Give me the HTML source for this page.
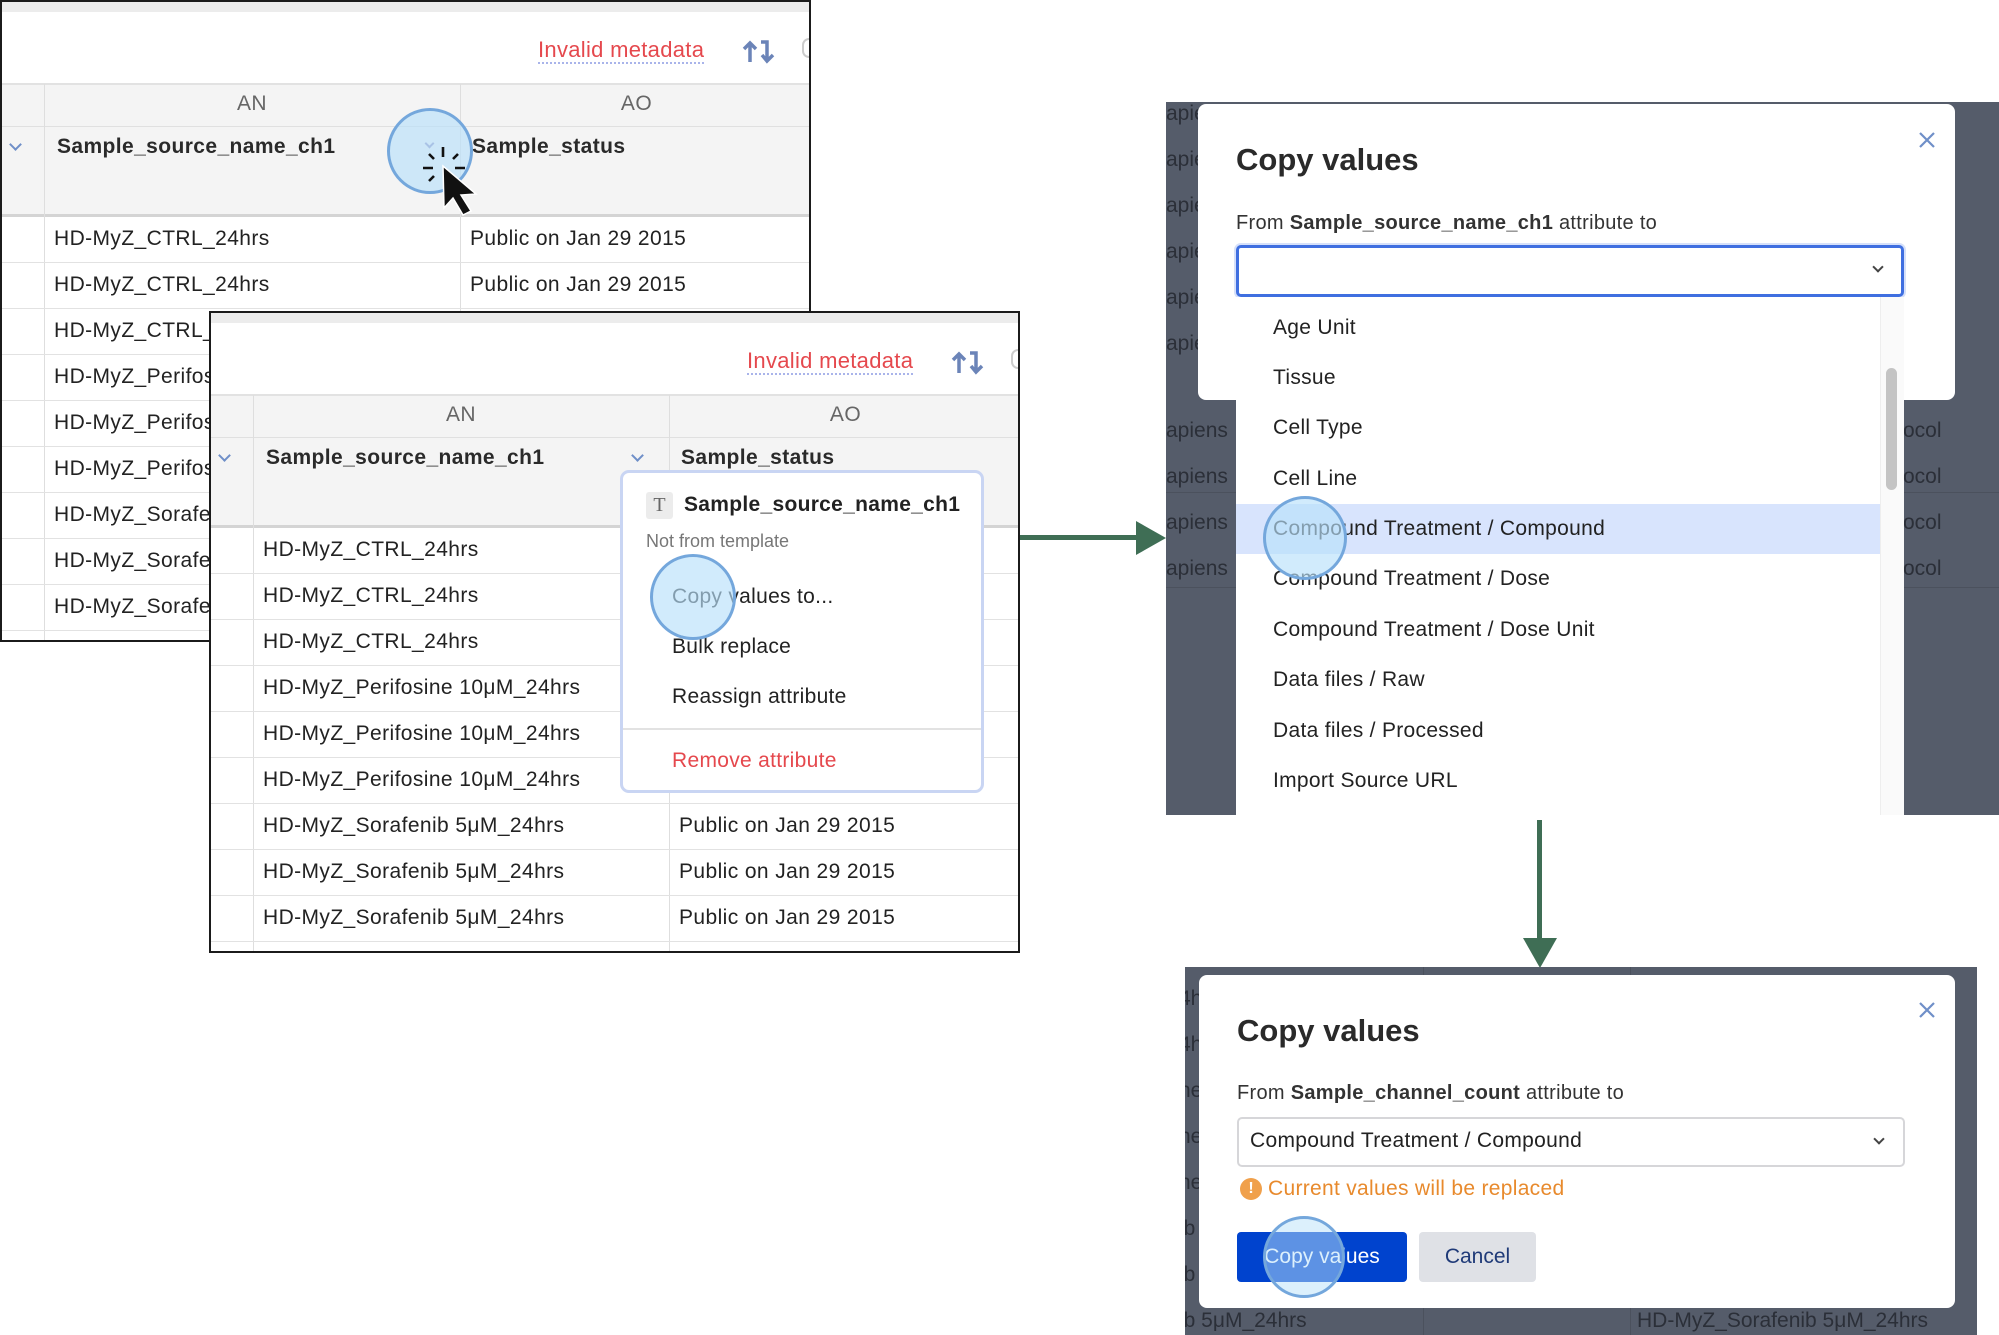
<!DOCTYPE html>
<html><head><meta charset="utf-8"><style>
*{box-sizing:border-box;margin:0;padding:0}
body{width:1999px;height:1335px;background:#fff;position:relative;overflow:hidden;font-family:"Liberation Sans",sans-serif;color:#222}
.a{position:absolute;white-space:nowrap}
.panel{position:absolute;width:811px;height:642px;border:2px solid #1b1b1b;background:#fff;overflow:hidden}
.panel .top{position:absolute;left:0;top:0;width:100%;height:10px;background:#ececec}
.panel .hdr{position:absolute;left:0;top:81px;width:100%;height:134px;background:#f4f4f4;border-top:2px solid #e2e2e2;border-bottom:3px solid #d4d4d4}
.vl{position:absolute;width:1px;background:#dedede}
.hl{position:absolute;height:1px;background:#e2e2e2;left:0;width:100%}
.cell{position:absolute;font-size:21px;letter-spacing:.4px;color:#222;white-space:nowrap}
.inv{position:absolute;font-size:22px;letter-spacing:.3px;color:#e5484d;border-bottom:2px dotted #a9b4ea;line-height:25px}
.circ{position:absolute;border-radius:50%;background:rgba(185,225,250,.65);border:3px solid #74a7dc}
.ov{position:absolute;background:#555c6a;overflow:hidden}
.ovt{position:absolute;font-size:21px;color:#2b2f38;white-space:nowrap}
.modal{position:absolute;background:#fff;border-radius:8px}
.chev{position:absolute;width:9px;height:9px;border-right:2px solid #444;border-bottom:2px solid #444;transform:rotate(45deg)}
.bchev{position:absolute;width:9px;height:9px;border-right:2px solid #6f8fc8;border-bottom:2px solid #6f8fc8;transform:rotate(45deg)}
.it{position:absolute;left:37px;font-size:21px;letter-spacing:.3px;color:#222}
</style></head><body>

<!-- PANEL 1 -->
<div class="panel" style="left:0;top:0">
 <div class="top"></div>
 <div class="inv" style="left:536px;top:35px">Invalid metadata</div>
 <svg class="a" style="left:740px;top:36px" width="34" height="28" viewBox="0 0 34 28"><path d="M8 24V5M2 11l6-6 6 6M19 4h6v19M20 17l5 6 6-6" fill="none" stroke="#6b84b8" stroke-width="3.5"/></svg>
 <div class="a" style="left:800px;top:36px;width:14px;height:20px;border:2px solid #ccc;border-radius:8px"></div>
 <div class="hdr"></div>
 <div class="hl" style="top:124px;background:#e0e0e0"></div>
 <div class="vl" style="left:42px;top:82px;height:560px"></div>
 <div class="vl" style="left:458px;top:82px;height:560px"></div>
 <div class="cell" style="left:42px;width:416px;text-align:center;top:90px;color:#666;font-size:21px">AN</div>
 <div class="cell" style="left:458px;width:353px;text-align:center;top:90px;color:#666;font-size:21px">AO</div>
 <div class="bchev" style="left:9px;top:138px"></div>
 <div class="cell" style="left:55px;top:133px;font-weight:bold;color:#2a2a2a">Sample_source_name_ch1</div>
 <div class="cell" style="left:470px;top:133px;font-weight:bold;color:#2a2a2a">Sample_status</div>
 <div class="cell" style="left:52px;top:225px">HD-MyZ_CTRL_24hrs</div><div class="cell" style="left:468px;top:225px">Public on Jan 29 2015</div><div class="hl" style="top:260px"></div>
 <div class="cell" style="left:52px;top:271px">HD-MyZ_CTRL_24hrs</div><div class="cell" style="left:468px;top:271px">Public on Jan 29 2015</div><div class="hl" style="top:306px"></div>
 <div class="cell" style="left:52px;top:317px">HD-MyZ_CTRL_24hrs</div><div class="hl" style="top:352px"></div>
 <div class="cell" style="left:52px;top:363px">HD-MyZ_Perifosine</div><div class="hl" style="top:398px"></div>
 <div class="cell" style="left:52px;top:409px">HD-MyZ_Perifosine</div><div class="hl" style="top:444px"></div>
 <div class="cell" style="left:52px;top:455px">HD-MyZ_Perifosine</div><div class="hl" style="top:490px"></div>
 <div class="cell" style="left:52px;top:501px">HD-MyZ_Sorafenib</div><div class="hl" style="top:536px"></div>
 <div class="cell" style="left:52px;top:547px">HD-MyZ_Sorafenib</div><div class="hl" style="top:582px"></div>
 <div class="cell" style="left:52px;top:593px">HD-MyZ_Sorafenib</div><div class="hl" style="top:628px"></div>
</div>
<div class="circ" style="left:387px;top:108px;width:86px;height:86px"></div>
<div class="bchev" style="left:426px;top:140px;width:7px;height:7px;border-color:#a9c3e6"></div>
<svg class="a" style="left:410px;top:140px" width="80" height="80" viewBox="410 140 80 80">
 <g stroke="#111" stroke-width="2.6"><path d="M443 147v10M423 168h10M455 168h10M429 154l5 5M458 154l-5 5M429 181l5-5"/></g>
 <path d="M443 166L444 208 453 198 463 215 471 211 461 195 476 194z" fill="#111" stroke="#fff" stroke-width="1.5"/>
</svg>

<!-- PANEL 2 -->
<div class="panel" style="left:209px;top:311px">
 <div class="top"></div>
 <div class="inv" style="left:536px;top:35px">Invalid metadata</div>
 <svg class="a" style="left:740px;top:36px" width="34" height="28" viewBox="0 0 34 28"><path d="M8 24V5M2 11l6-6 6 6M19 4h6v19M20 17l5 6 6-6" fill="none" stroke="#6b84b8" stroke-width="3.5"/></svg>
 <div class="a" style="left:800px;top:36px;width:14px;height:20px;border:2px solid #ccc;border-radius:8px"></div>
 <div class="hdr"></div>
 <div class="hl" style="top:124px;background:#e0e0e0"></div>
 <div class="vl" style="left:42px;top:82px;height:560px"></div>
 <div class="vl" style="left:458px;top:82px;height:560px"></div>
 <div class="cell" style="left:42px;width:416px;text-align:center;top:90px;color:#666;font-size:21px">AN</div>
 <div class="cell" style="left:458px;width:353px;text-align:center;top:90px;color:#666;font-size:21px">AO</div>
 <div class="bchev" style="left:9px;top:138px"></div>
 <div class="bchev" style="left:422px;top:138px"></div>
 <div class="cell" style="left:55px;top:133px;font-weight:bold;color:#2a2a2a">Sample_source_name_ch1</div>
 <div class="cell" style="left:470px;top:133px;font-weight:bold;color:#2a2a2a">Sample_status</div>
 <div class="cell" style="left:52px;top:225px">HD-MyZ_CTRL_24hrs</div><div class="hl" style="top:260px"></div>
 <div class="cell" style="left:52px;top:271px">HD-MyZ_CTRL_24hrs</div><div class="hl" style="top:306px"></div>
 <div class="cell" style="left:52px;top:317px">HD-MyZ_CTRL_24hrs</div><div class="hl" style="top:352px"></div>
 <div class="cell" style="left:52px;top:363px">HD-MyZ_Perifosine 10μM_24hrs</div><div class="hl" style="top:398px"></div>
 <div class="cell" style="left:52px;top:409px">HD-MyZ_Perifosine 10μM_24hrs</div><div class="hl" style="top:444px"></div>
 <div class="cell" style="left:52px;top:455px">HD-MyZ_Perifosine 10μM_24hrs</div><div class="hl" style="top:490px"></div>
 <div class="cell" style="left:52px;top:501px">HD-MyZ_Sorafenib 5μM_24hrs</div><div class="cell" style="left:468px;top:501px">Public on Jan 29 2015</div><div class="hl" style="top:536px"></div>
 <div class="cell" style="left:52px;top:547px">HD-MyZ_Sorafenib 5μM_24hrs</div><div class="cell" style="left:468px;top:547px">Public on Jan 29 2015</div><div class="hl" style="top:582px"></div>
 <div class="cell" style="left:52px;top:593px">HD-MyZ_Sorafenib 5μM_24hrs</div><div class="cell" style="left:468px;top:593px">Public on Jan 29 2015</div><div class="hl" style="top:628px"></div>
</div>

<!-- context menu -->
<div class="a" style="left:620px;top:470px;width:364px;height:323px;background:#fff;border:3px solid #c9d5f3;border-radius:9px">
 <div class="a" style="left:23px;top:19px;width:27px;height:27px;background:#ececec;border-radius:3px;font-family:'Liberation Serif',serif;font-size:20px;color:#666;text-align:center;line-height:27px">T</div>
 <div class="a" style="left:61px;top:20px;font-size:21px;font-weight:bold;letter-spacing:.3px;color:#222">Sample_source_name_ch1</div>
 <div class="a" style="left:23px;top:58px;font-size:18px;color:#777">Not from template</div>
 <div class="a" style="left:49px;top:112px;font-size:21px;letter-spacing:.3px;color:#222">Copy values to...</div>
 <div class="a" style="left:49px;top:162px;font-size:21px;letter-spacing:.3px;color:#222">Bulk replace</div>
 <div class="a" style="left:49px;top:212px;font-size:21px;letter-spacing:.3px;color:#222">Reassign attribute</div>
 <div class="a" style="left:0;top:255px;width:100%;height:2px;background:#e2e2e2"></div>
 <div class="a" style="left:49px;top:276px;font-size:21px;letter-spacing:.3px;color:#e5484d">Remove attribute</div>
</div>
<div class="circ" style="left:650px;top:554px;width:86px;height:86px"></div>

<!-- arrows -->
<div class="a" style="left:1020px;top:535px;width:125px;height:5px;background:#3f6e55"></div>
<svg class="a" style="left:1136px;top:521px" width="32" height="34"><path d="M0 0L30 17 0 34z" fill="#3f6e55"/></svg>
<div class="a" style="left:1537px;top:820px;width:5px;height:125px;background:#3f6e55"></div>
<svg class="a" style="left:1523px;top:938px" width="34" height="30"><path d="M0 0L34 0 17 30z" fill="#3f6e55"/></svg>

<!-- MODAL 1 -->
<div class="ov" style="left:1166px;top:102px;width:833px;height:713px">
 <div class="ovt" style="left:0;top:0">apie</div><div class="ovt" style="left:0;top:46px">apie</div><div class="ovt" style="left:0;top:92px">apie</div><div class="ovt" style="left:0;top:138px">apie</div><div class="ovt" style="left:0;top:184px">apie</div><div class="ovt" style="left:0;top:230px">apie</div>
 <div class="ovt" style="left:0;top:317px">apiens</div><div class="ovt" style="left:0;top:363px">apiens</div><div class="ovt" style="left:0;top:409px">apiens</div><div class="ovt" style="left:0;top:455px">apiens</div>
 <div class="ovt" style="left:737px;top:317px">ocol</div><div class="ovt" style="left:737px;top:363px">ocol</div><div class="ovt" style="left:737px;top:409px">ocol</div><div class="ovt" style="left:737px;top:455px">ocol</div>
 <div class="a" style="left:0;top:390px;width:100%;height:1px;background:#4b515d"></div>
 <div class="a" style="left:0;top:485px;width:100%;height:1px;background:#4b515d"></div>
</div>
<div class="modal" style="left:1198px;top:104px;width:757px;height:296px">
 <div class="a" style="left:38px;top:38px;font-size:31px;font-weight:bold;color:#2a2a2a">Copy values</div>
 <svg class="a" style="left:720px;top:27px" width="18" height="18"><path d="M2 2L16 16M16 2L2 16" stroke="#6f8fc8" stroke-width="2.2"/></svg>
 <div class="a" style="left:38px;top:108px;font-size:20px;letter-spacing:.3px;color:#333">From <b>Sample_source_name_ch1</b> attribute to</div>
</div>
<div class="a" style="left:1236px;top:245px;width:668px;height:52px;border:3px solid #3f6fe0;border-radius:5px;background:#fff;box-shadow:0 0 0 2px #d5e0fa"></div>
<div class="chev" style="left:1874px;top:263px;width:8px;height:8px"></div>
<div class="a" style="left:1236px;top:297px;width:668px;height:518px;background:#fff;overflow:hidden">
 <div class="a" style="left:644px;top:0;width:24px;height:518px;background:#fafafa;border-left:1px solid #eee"></div>
 <div class="a" style="left:650px;top:71px;width:11px;height:122px;background:#c4c4c4;border-radius:6px"></div>
 <div class="a" style="left:0;top:207px;width:644px;height:50px;background:#d8e4fd"></div>
 <div class="it" style="top:19px">Age Unit</div>
 <div class="it" style="top:69px">Tissue</div>
 <div class="it" style="top:119px">Cell Type</div>
 <div class="it" style="top:170px">Cell Line</div>
 <div class="it" style="top:220px">Compound Treatment / Compound</div>
 <div class="it" style="top:270px">Compound Treatment / Dose</div>
 <div class="it" style="top:321px">Compound Treatment / Dose Unit</div>
 <div class="it" style="top:371px">Data files / Raw</div>
 <div class="it" style="top:422px">Data files / Processed</div>
 <div class="it" style="top:472px">Import Source URL</div>
</div>
<div class="circ" style="left:1263px;top:496px;width:84px;height:84px"></div>

<!-- MODAL 2 -->
<div class="ov" style="left:1185px;top:967px;width:792px;height:368px">
 <div class="ovt" style="left:-6px;top:20px">4h</div><div class="ovt" style="left:-6px;top:66px">4h</div>
 <div class="ovt" style="left:-6px;top:112px">ne</div><div class="ovt" style="left:-6px;top:158px">ne</div><div class="ovt" style="left:-6px;top:204px">ne</div>
 <div class="ovt" style="left:-6px;top:250px">ib</div><div class="ovt" style="left:-6px;top:296px">ib</div>
 <div class="ovt" style="left:-6px;top:342px">ib 5μM_24hrs</div>
 <div class="ovt" style="left:452px;top:342px">HD-MyZ_Sorafenib 5μM_24hrs</div>
 <div class="a" style="left:238px;top:0;width:1px;height:368px;background:#4b515d"></div>
 <div class="a" style="left:445px;top:0;width:1px;height:368px;background:#4b515d"></div>
</div>
<div class="modal" style="left:1199px;top:975px;width:756px;height:333px">
 <div class="a" style="left:38px;top:38px;font-size:31px;font-weight:bold;color:#2a2a2a">Copy values</div>
 <svg class="a" style="left:719px;top:26px" width="18" height="18"><path d="M2 2L16 16M16 2L2 16" stroke="#6f8fc8" stroke-width="2.2"/></svg>
 <div class="a" style="left:38px;top:107px;font-size:20px;letter-spacing:.3px;color:#333">From <b>Sample_channel_count</b> attribute to</div>
 <div class="a" style="left:38px;top:142px;width:668px;height:50px;border:2px solid #d6d6d9;border-radius:5px"></div>
 <div class="a" style="left:51px;top:154px;font-size:21px;letter-spacing:.3px;color:#222">Compound Treatment / Compound</div>
 <div class="chev" style="left:676px;top:160px;width:8px;height:8px"></div>
 <div class="a" style="left:41px;top:203px;width:22px;height:22px;border-radius:50%;background:#f0a04b;color:#fff;font-size:16px;font-weight:bold;text-align:center;line-height:22px">!</div>
 <div class="a" style="left:69px;top:202px;font-size:21px;letter-spacing:.3px;color:#e88a2d">Current values will be replaced</div>
 <div class="a" style="left:38px;top:257px;width:170px;height:50px;background:#0043ce;border-radius:4px;color:#fff;font-size:21px;text-align:center;line-height:50px">Copy values</div>
 <div class="a" style="left:220px;top:257px;width:117px;height:50px;background:#dfe1e6;border-radius:4px;color:#1f3a78;font-size:21px;text-align:center;line-height:50px">Cancel</div>
</div>
<div class="circ" style="left:1263px;top:1216px;width:82px;height:82px;background:rgba(185,225,250,.5)"></div>

</body></html>
